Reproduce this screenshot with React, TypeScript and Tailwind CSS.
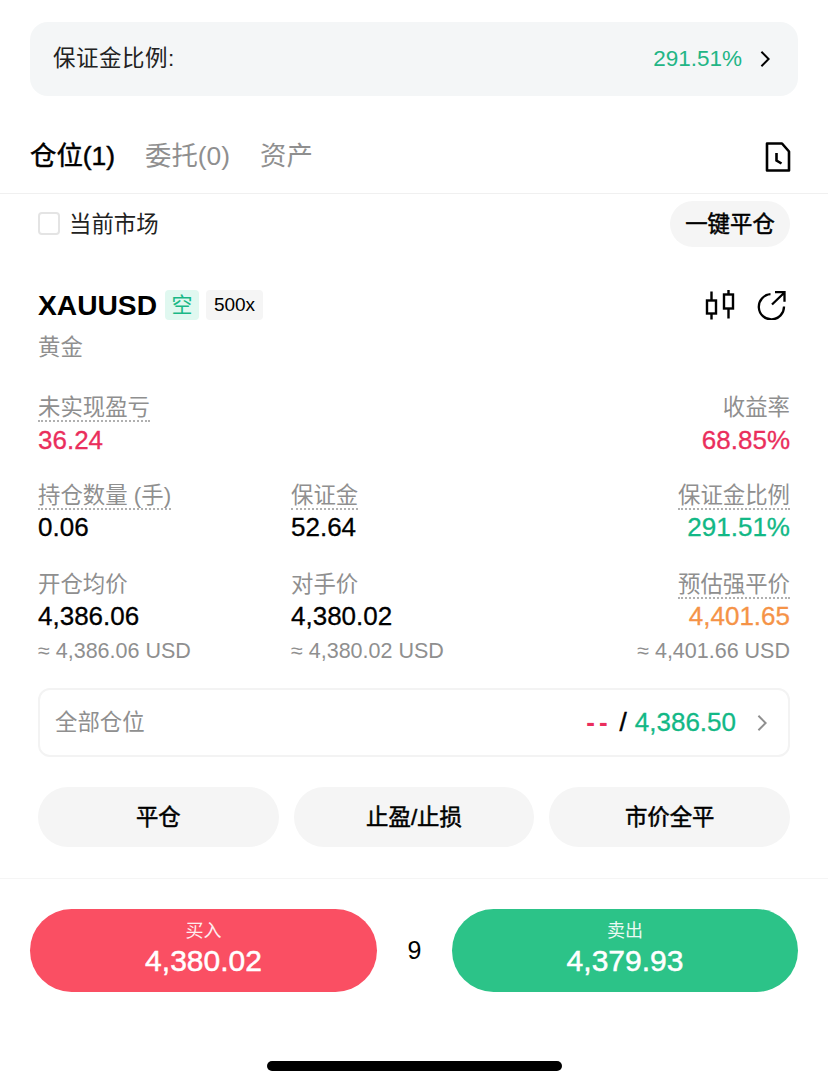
import React from 'react';

const FONT = "font-['Liberation_Sans','Noto_Sans_CJK_SC',sans-serif]";

const ChevronRight = ({ className }: { className: string }) => (
  <svg viewBox="0 0 12 20" className={className} fill="none" stroke="currentColor" strokeWidth="2.2">
    <path d="M2 2l8 8-8 8" />
  </svg>
);

const HistoryIcon = () => (
  <svg viewBox="0 0 26 30" className="w-[26px] h-[30px] text-black" fill="none" stroke="currentColor" strokeWidth="2.6">
    <path d="M2 1.5h15l7 8v19H2z" strokeLinejoin="round" />
    <path d="M11.5 11v7.5l5 3" />
  </svg>
);

const CandleIcon = () => (
  <svg viewBox="0 0 30 30" className="w-[30px] h-[30px] text-black" fill="none" stroke="currentColor" strokeWidth="2.4">
    <rect x="2" y="10.5" width="9" height="13" />
    <path d="M6.5 1.5v9M6.5 23.5v6" />
    <rect x="19" y="4.5" width="9" height="14" />
    <path d="M23.5 0v4.5M23.5 18.5v10" />
  </svg>
);

const ShareIcon = () => (
  <svg viewBox="0 0 30 30" className="w-[30px] h-[30px] text-black" fill="none" stroke="currentColor" strokeWidth="2.3">
    <path d="M13.5 4.2A12.6 12.6 0 1 0 27 16.5" />
    <path d="M15 14.5L27.5 2.5M18 2.2h9.5v9.5" />
  </svg>
);

const Label = ({ text, dotted }: { text: string; dotted?: boolean }) => (
  <div className="flex h-[29px]">
    <span
      className={`text-[22.4px] leading-[28px] h-[28px] text-[#8f8f8f] ${dotted ? 'border-b-2 border-dotted border-[#b0b0b0]' : ''}`}
    >
      {text}
    </span>
  </div>
);

const Stat = ({
  label,
  value,
  sub,
  dotted,
  color = 'text-black',
  right,
}: {
  label: string;
  value: string;
  sub?: string;
  dotted?: boolean;
  color?: string;
  right?: boolean;
}) => (
  <div className={`flex flex-col ${right ? 'items-end' : 'items-start'}`}>
    <Label text={label} dotted={dotted} />
    <div className={`text-[26px] leading-[32px] h-[33px] [-webkit-text-stroke:0.3px] ${color}`}>{value}</div>
    {sub && <div className="text-[21.5px] leading-[36px] h-[33px] text-[#8f8f8f]">{sub}</div>}
  </div>
);

const ActionButton = ({ text }: { text: string }) => (
  <button className="flex-1 h-[60px] pt-[2px] rounded-full bg-[#f5f5f5] text-[22.4px] text-black [-webkit-text-stroke:0.5px]">
    {text}
  </button>
);

export default function App() {
  return (
    <div className={`${FONT} w-[828px] h-[1085px] bg-white flex flex-col overflow-hidden`}>
      {/* Margin ratio */}
      <div className="px-[30px] pt-[22px]">
        <div className="h-[74px] rounded-[18px] bg-[#f4f6f7] flex items-center justify-between pl-[23px] pr-[27px]">
          <span className="text-[22.5px] tracking-[0.5px] text-[#222]">保证金比例:</span>
          <div className="flex items-center gap-[17px]">
            <span className="text-[22.5px] text-[#22b585]">291.51%</span>
            <ChevronRight className="w-[12px] h-[18px] text-black" />
          </div>
        </div>
      </div>

      {/* Tabs */}
      <div className="h-[98px] pl-[30px] pr-[37px] pt-[27px] flex items-start justify-between border-b border-[#f0f0f0]">
        <div className="flex items-center gap-[30px] h-[68px]">
          <span className="text-[26.4px] text-black [-webkit-text-stroke:0.45px]">仓位(1)</span>
          <span className="text-[26.4px] text-[#8f8f8f]">委托(0)</span>
          <span className="text-[26.4px] text-[#8f8f8f]">资产</span>
        </div>
        <div className="pt-[19px]">
          <HistoryIcon />
        </div>
      </div>

      {/* Filter */}
      <div className="h-[60px] px-[38px] flex items-center justify-between">
        <div className="flex items-center gap-[9px]">
          <div className="w-[22px] h-[23px] rounded-[4px] border-2 border-[#e4e4e4]" />
          <span className="mt-[1px] text-[22.4px] text-[#222]">当前市场</span>
        </div>
        <button className="w-[120px] h-[46px] pt-[1px] rounded-full bg-[#f5f5f5] text-[22.4px] text-black [-webkit-text-stroke:0.5px]">
          一键平仓
        </button>
      </div>

      {/* Position card */}
      <div className="px-[38px] pt-[33px]">
        <div className="flex items-center justify-between h-[36px]">
          <div className="flex items-center">
            <span className="text-[28.2px] font-bold text-black">XAUUSD</span>
            <span className="ml-[8px] w-[34px] h-[30px] rounded-[4px] bg-[#e0f8f0] text-[21px] text-[#19b886] flex items-center justify-center">空</span>
            <span className="ml-[7px] w-[57px] h-[30px] rounded-[4px] bg-[#f5f5f5] text-[19px] text-black flex items-center justify-center">500x</span>
          </div>
          <div className="flex items-center gap-[22px] pr-[3px]">
            <CandleIcon />
            <ShareIcon />
          </div>
        </div>
        <div className="mt-[10px] text-[22.4px] leading-[30px] text-[#8f8f8f]">黄金</div>

        <div className="mt-[31px] flex justify-between">
          <Stat label="未实现盈亏" value="36.24" dotted color="mt-[1px] text-[#ea2e5c]" />
          <Stat label="收益率" value="68.85%" color="mt-[1px] text-[#ea2e5c]" right />
        </div>

        <div className="mt-[25px] grid grid-cols-[253px_1fr_auto]">
          <Stat label="持仓数量 (手)" value="0.06" dotted />
          <Stat label="保证金" value="52.64" dotted />
          <Stat label="保证金比例" value="291.51%" dotted color="text-[#12b886]" right />
        </div>

        <div className="mt-[27px] grid grid-cols-[253px_1fr_auto]">
          <Stat label="开仓均价" value="4,386.06" sub="≈ 4,386.06 USD" />
          <Stat label="对手价" value="4,380.02" sub="≈ 4,380.02 USD" />
          <Stat label="预估强平价" value="4,401.65" sub="≈ 4,401.66 USD" dotted color="text-[#f59347]" right />
        </div>

        <div className="mt-[22px] h-[69px] rounded-[12px] border-2 border-[#f3f3f3] flex items-center justify-between pl-[15px] pr-[20px]">
          <span className="text-[22.4px] text-[#8f8f8f]">全部仓位</span>
          <div className="flex items-center">
            <span className="text-[26px] font-bold text-[#ea2e5c] tracking-[4px]">--</span>
            <span className="ml-[8px] text-[26px] text-black [-webkit-text-stroke:0.5px]">/</span>
            <span className="ml-[8px] text-[26px] text-[#12b886] [-webkit-text-stroke:0.3px]">4,386.50</span>
            <ChevronRight className="ml-[20px] w-[12px] h-[18px] text-[#8f8f8f]" />
          </div>
        </div>

        <div className="mt-[30px] flex gap-[15px]">
          <ActionButton text="平仓" />
          <ActionButton text="止盈/止损" />
          <ActionButton text="市价全平" />
        </div>
      </div>

      {/* Buy / sell */}
      <div className="mt-[31px] border-t border-[#f5f5f5] pl-[30px] pr-[30px] pt-[30px] flex items-center">
        <button className="w-[347px] h-[83px] rounded-full bg-[#fa4f63] text-white flex flex-col items-center justify-center">
          <span className="text-[18px] leading-[24px] opacity-90 -mt-[3px]">买入</span>
          <span className="text-[30px] leading-[36px] [-webkit-text-stroke:0.5px]">4,380.02</span>
        </button>
        <span className="flex-1 text-center text-[25px] text-black">9</span>
        <button className="w-[346px] h-[83px] rounded-full bg-[#2cc388] text-white flex flex-col items-center justify-center">
          <span className="text-[18px] leading-[24px] opacity-90 -mt-[3px]">卖出</span>
          <span className="text-[30px] leading-[36px] [-webkit-text-stroke:0.5px]">4,379.93</span>
        </button>
      </div>

      {/* Home indicator */}
      <div className="mt-[69px] flex justify-center">
        <div className="w-[295px] h-[10px] rounded-full bg-black" />
      </div>
    </div>
  );
}
